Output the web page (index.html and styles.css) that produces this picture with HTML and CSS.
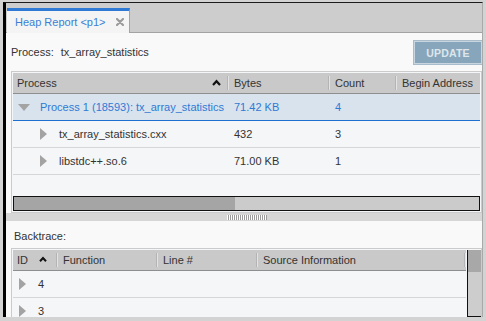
FILE: index.html
```html
<!DOCTYPE html>
<html lang="en">
<head>
    <meta charset="UTF-8">
    <title>Heap Report</title>
    <link rel="stylesheet" href="styles.css">
</head>
<body>

<div class="window">
    <div class="tab-bar">
        <div class="tab">
            <span class="tab-title">Heap Report &lt;p1&gt;</span>
            <svg class="tab-close" width="8" height="8" viewBox="0 0 8 8"><path d="M1 1L7 7M7 1L1 7" stroke="#9b9b9b" stroke-width="2.2" stroke-linecap="round"/></svg>
        </div>
    </div>

    <div class="panel">
        <div class="process-row">
            <span class="process-label">Process:</span>
            <span class="process-name">tx_array_statistics</span>
            <button type="button" class="update-button">UPDATE</button>
        </div>

        <div class="table heap-table">
            <div class="table-header heap-cols">
                <div class="th">Process
                    <svg class="sort-arrow" width="9" height="7" viewBox="0 0 9 7"><path d="M1 6L4.5 2.2L8 6" fill="none" stroke="#111" stroke-width="2.2"/></svg>
                </div>
                <div class="th sep">Bytes</div>
                <div class="th sep">Count</div>
                <div class="th sep">Begin Address</div>
            </div>
            <div class="table-body">
                <div class="tr heap-cols selected">
                    <div class="td">
                        <svg class="caret-down" width="12" height="7" viewBox="0 0 12 7"><path d="M0 0H12L6 7Z" fill="#a3a3a3"/></svg>
                        Process 1 (18593): tx_array_statistics
                    </div>
                    <div class="td">71.42 KB</div>
                    <div class="td">4</div>
                    <div class="td"></div>
                </div>
                <div class="tr heap-cols">
                    <div class="td child">
                        <svg class="caret-right" width="7" height="12" viewBox="0 0 7 12"><path d="M0 0V12L7 6Z" fill="#a3a3a3"/></svg>
                        tx_array_statistics.cxx
                    </div>
                    <div class="td">432</div>
                    <div class="td">3</div>
                    <div class="td"></div>
                </div>
                <div class="tr heap-cols">
                    <div class="td child">
                        <svg class="caret-right" width="7" height="12" viewBox="0 0 7 12"><path d="M0 0V12L7 6Z" fill="#a3a3a3"/></svg>
                        libstdc++.so.6
                    </div>
                    <div class="td">71.00 KB</div>
                    <div class="td">1</div>
                    <div class="td"></div>
                </div>
            </div>
            <div class="h-scrollbar"><div class="h-thumb"></div></div>
        </div>

        <div class="splitter"><div class="splitter-grip"></div></div>

        <div class="section-label">Backtrace:</div>

        <div class="table trace-table">
            <div class="trace-main">
                <div class="table-header trace-cols">
                    <div class="th">ID
                        <svg class="sort-arrow small" width="8" height="6" viewBox="0 0 8 6"><path d="M1 5.2L4 2L7 5.2" fill="none" stroke="#111" stroke-width="2"/></svg>
                    </div>
                    <div class="th sep">Function</div>
                    <div class="th sep">Line #</div>
                    <div class="th sep sep-end">Source Information</div>
                </div>
                <div class="tr trace-cols">
                    <div class="td">
                        <svg class="caret-right" width="7" height="12" viewBox="0 0 7 12"><path d="M0 0V12L7 6Z" fill="#a3a3a3"/></svg>
                        4
                    </div>
                    <div class="td"></div><div class="td"></div><div class="td"></div>
                </div>
                <div class="tr trace-cols">
                    <div class="td">
                        <svg class="caret-right" width="7" height="12" viewBox="0 0 7 12"><path d="M0 0V12L7 6Z" fill="#a3a3a3"/></svg>
                        3
                    </div>
                    <div class="td"></div><div class="td"></div><div class="td"></div>
                </div>
            </div>
            <div class="v-scrollbar"><div class="v-thumb"></div></div>
        </div>
    </div>
</div>

</body>
</html>
```

FILE: styles.css
```css
/* Base */
body {
    margin: 0; background: #d3d3d3; overflow: hidden;
    font-family: "Liberation Sans", Arial, sans-serif; font-size: 11px; color: #333;
}
.window {
    margin: 2px 0 0 3px; width: 476px; height: 314px;
    border-top: 1px solid #1c1c1c; border-left: 3px solid #000; border-right: 1px solid #a9a9a9;
    display: flex; flex-direction: column; overflow: hidden; background: #f9f9f9;
}

/* Tabs */
.tab-bar {
    height: 29px; background: #cdcdcd; border-bottom: 1px solid #a3a3a3;
    display: flex; align-items: flex-end; padding-left: 1px; flex-shrink: 0;
}
.tab {
    box-sizing: border-box; width: 123px; height: 25px; margin-bottom: -1px;
    background: #f4f4f4; border-top: 3px solid #2f7ad5; border-right: 1px solid #a3a3a3;
    display: flex; align-items: center; padding: 0 0 1px 8px;
}
.tab-title { color: #3a80d6; font-size: 11px; }
.tab-close { margin-left: 10px; }

/* Panel */
.panel { flex: 1; display: flex; flex-direction: column; padding-left: 5px; min-height: 0; }
.process-row { height: 38px; display: flex; align-items: center; flex-shrink: 0; }
.process-label { margin-right: 7px; }
.update-button {
    margin-left: auto; width: 70px; height: 25px; margin-right: -1px;
    background: #87a6bb; border: 1px solid #a9bccb; box-shadow: inset 0 0 0 1px #c9d6df;
    color: #dde6ec; font-family: inherit; font-size: 10.5px; font-weight: bold; letter-spacing: 0.2px;
    padding: 0; margin-top: 1px;
}

/* Tables */
.table { border: 1px solid #cbcbcb; background: #f5f6f8; padding: 1px 1px 0 1px; box-sizing: border-box; }
.heap-table { height: 142px; display: flex; flex-direction: column; flex-shrink: 0; }
.heap-cols { display: grid; grid-template-columns: 215px 101px 67px 1fr; }
.trace-cols { display: grid; grid-template-columns: 44px 100px 100px 1fr; }
.table-header { height: 20px; background: #c9c9c9; border-bottom: 1px solid #8e8e8e; }
.th { position: relative; display: flex; align-items: center; padding-left: 4px; color: #333; }
.th.sep { padding-left: 6px; }
.th.sep::before {
    content: ""; position: absolute; left: 0; top: 3px; bottom: 3px;
    width: 1px; background: #e3e3e3; box-shadow: -1px 0 0 #b4b4b4;
}
.sep-end::after {
    content: ""; position: absolute; right: 0; top: 3px; bottom: 3px;
    width: 1px; background: #e3e3e3; box-shadow: -1px 0 0 #b4b4b4;
}
.sort-arrow { position: absolute; right: 7px; top: 6px; }
.sort-arrow.small { right: 10px; top: 6px; }

.table-body { flex: 1; }
.tr { height: 26px; border-bottom: 1px solid #d6d6d6; }
.td { display: flex; align-items: center; padding-left: 6px; white-space: nowrap; }
.tr .td:first-child { padding-left: 5px; }
.tr.selected { background: #d9e3ed; border-bottom-color: #1f6fd0; color: #2f7ad5; }
.caret-down { margin-right: 10px; margin-top: 1px; }
.tr .td.child { padding-left: 27px; }
.caret-right { margin-right: 12px; }
.trace-cols .caret-right { margin-left: 1px; }

.h-scrollbar {
    height: 13px; border: 1px solid #111; background: #cbcbcb; margin-bottom: 1px;
}
.h-thumb { width: 221px; height: 100%; background: #a5a5a5; }

/* Splitter */
.splitter {
    height: 8px; margin-left: -5px; background: #d6d6d6; flex-shrink: 0;
    display: flex; justify-content: center; align-items: center;
}
.splitter-grip {
    width: 40px; height: 5px; margin-left: 6px;
    background: repeating-linear-gradient(90deg, #fdfdfd 0 1px, #9c9c9c 1px 2px);
}
.section-label { height: 27px; display: flex; align-items: center; padding: 3px 0 0 3px; box-sizing: border-box; flex-shrink: 0; }

/* Backtrace */
.trace-table { flex: 1; display: flex; padding-right: 0; border-bottom: none; min-height: 0; overflow: hidden; }
.trace-main { flex: 1; }
.trace-main .td:first-child { padding-left: 5px; }
.v-scrollbar {
    width: 14px; border-left: 1px solid #111; border-bottom: 1px solid #111;
    background: #cdcdcd; margin-left: 1px; box-sizing: border-box; height: 67px;
}
.v-thumb { height: 22px; background: #a8a8a8; }
```
